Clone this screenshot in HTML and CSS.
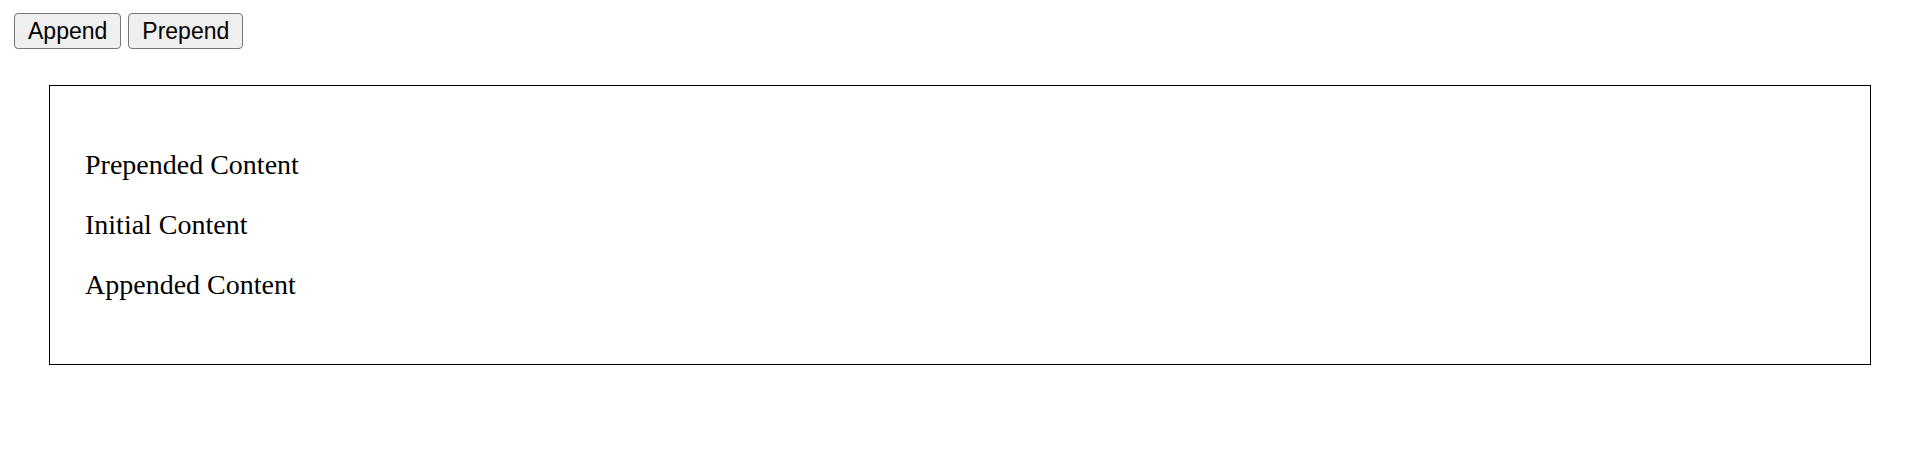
FILE: index.html
```html
<!DOCTYPE html>
<html>
<head>
<meta charset="utf-8">
<link rel="stylesheet" href="styles.css">
</head>
<body>
<div class="toolbar">
  <button class="btn">Append</button>
  <button class="btn">Prepend</button>
</div>
<div class="container">
  <p class="item">Prepended Content</p>
  <p class="item">Initial Content</p>
  <p class="item">Appended Content</p>
</div>
</body>
</html>
```
FILE: styles.css
```css
html, body {
  background: #ffffff;
}
body {
  margin: 13px 14px;
  font-family: "Liberation Serif", "Times New Roman", serif;
  color: #000;
}
.toolbar {
  display: flex;
  gap: 7px;
}
.btn {
  height: 36px;
  padding: 0 13px;
  margin: 0;
  font-family: "Liberation Sans", Arial, sans-serif;
  font-size: 23px;
  color: #000;
  background: #efefef;
  border: 1px solid #767676;
  border-radius: 4px;
  line-height: 1;
}
.container {
  margin: 36px 31px 0 35px;
  padding: 35px;
  border: 1px solid #000;
}
.item {
  margin: 28px 0;
  font-size: 28px;
  line-height: normal;
}
```
